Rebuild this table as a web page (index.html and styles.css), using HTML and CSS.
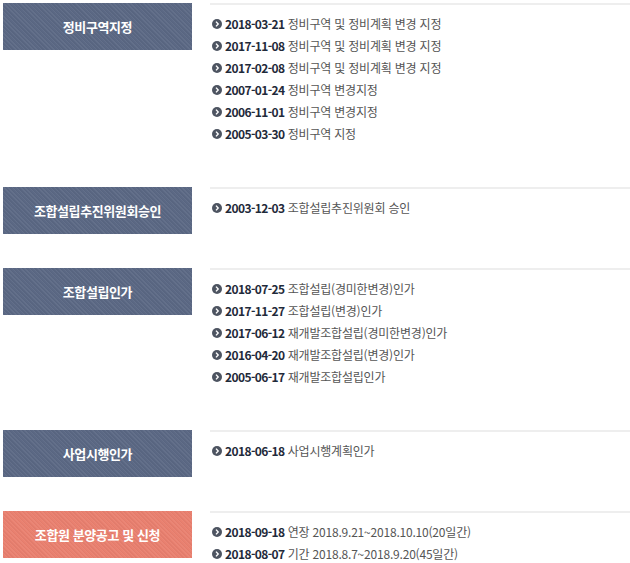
FILE: index.html
```html
<!DOCTYPE html>
<html lang="ko">
<head>
<meta charset="utf-8">
<link rel="stylesheet" href="styles.css">
</head>
<body>
<div class="timeline">
  <div class="row">
    <div class="label">정비구역지정</div>
    <ul class="items">
      <li><span class="date">2018-03-21</span> 정비구역 및 정비계획 변경 지정</li>
      <li><span class="date">2017-11-08</span> 정비구역 및 정비계획 변경 지정</li>
      <li><span class="date">2017-02-08</span> 정비구역 및 정비계획 변경 지정</li>
      <li><span class="date">2007-01-24</span> 정비구역 변경지정</li>
      <li><span class="date">2006-11-01</span> 정비구역 변경지정</li>
      <li><span class="date">2005-03-30</span> 정비구역 지정</li>
    </ul>
  </div>
  <div class="row">
    <div class="label">조합설립추진위원회승인</div>
    <ul class="items">
      <li><span class="date">2003-12-03</span> 조합설립추진위원회 승인</li>
    </ul>
  </div>
  <div class="row">
    <div class="label">조합설립인가</div>
    <ul class="items">
      <li><span class="date">2018-07-25</span> 조합설립(경미한변경)인가</li>
      <li><span class="date">2017-11-27</span> 조합설립(변경)인가</li>
      <li><span class="date">2017-06-12</span> 재개발조합설립(경미한변경)인가</li>
      <li><span class="date">2016-04-20</span> 재개발조합설립(변경)인가</li>
      <li><span class="date">2005-06-17</span> 재개발조합설립인가</li>
    </ul>
  </div>
  <div class="row">
    <div class="label">사업시행인가</div>
    <ul class="items">
      <li><span class="date">2018-06-18</span> 사업시행계획인가</li>
    </ul>
  </div>
  <div class="row">
    <div class="label label-accent">조합원 분양공고 및 신청</div>
    <ul class="items">
      <li><span class="date">2018-09-18</span> 연장 2018.9.21~2018.10.10(20일간)</li>
      <li><span class="date">2018-08-07</span> 기간 2018.8.7~2018.9.20(45일간)</li>
    </ul>
  </div>
</div>
</body>
</html>
```

FILE: styles.css
```css
html, body {
  margin: 0;
  padding: 0;
  background: #fff;
}
body {
  font-family: "Noto Sans CJK KR", "Noto Sans", sans-serif;
  font-size: 12px;
  color: #555;
}
.timeline {
  padding: 3px 0 0 3px;
}
.row {
  display: flex;
  align-items: flex-start;
  gap: 18px;
  margin-bottom: 34px;
}
.label {
  flex: 0 0 189px;
  height: 47px;
  display: flex;
  align-items: center;
  justify-content: center;
  color: #fff;
  font-weight: bold;
  font-size: 13px;
  letter-spacing: -0.4px;
  background-color: #5b6884;
  background-image: repeating-linear-gradient(45deg, rgba(255,255,255,0.05) 0 1px, rgba(0,0,0,0.03) 1px 2px, transparent 2px 3px);
}
.label-accent {
  background-color: #e9806f;
}
.items {
  flex: 1;
  list-style: none;
  margin: 0;
  padding: 8px 0;
  border-top: 2px solid #eeeeee;
}
.items li {
  height: 22px;
  line-height: 22px;
  display: flex;
  align-items: center;
  white-space: pre;
  letter-spacing: -0.2px;
}
.items li::before {
  content: "";
  flex: 0 0 10px;
  width: 10px;
  height: 10px;
  margin: 0 3px 0 2px;
  border-radius: 50%;
  background: #4d5461 url("data:image/svg+xml,%3Csvg xmlns='http://www.w3.org/2000/svg' viewBox='0 0 10 10'%3E%3Cpath d='M4 2.6 L6.2 5 L4 7.4' fill='none' stroke='white' stroke-width='1.4'/%3E%3C/svg%3E") center/10px 10px no-repeat;
}
.date {
  font-weight: bold;
  color: #1f2a3a;
  letter-spacing: -0.6px;
}
```
